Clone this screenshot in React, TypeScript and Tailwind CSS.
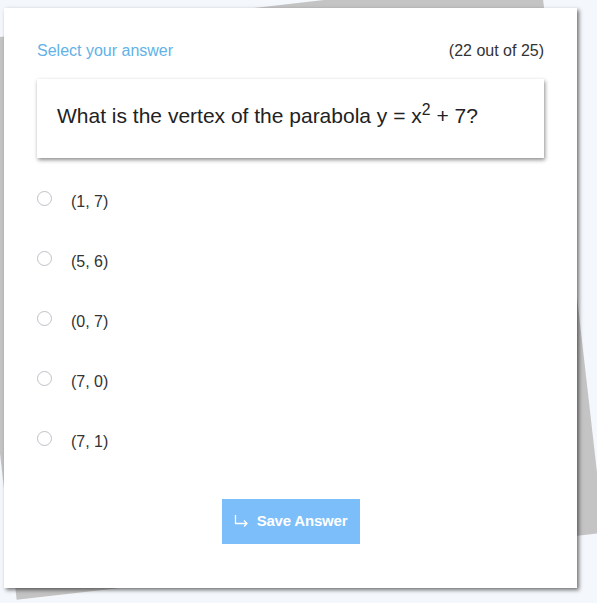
import React from "react";

const options = ["(1, 7)", "(5, 6)", "(0, 7)", "(7, 0)", "(7, 1)"];

function SaveIcon() {
  return (
    <svg width="15" height="13" viewBox="0 0 15 13" fill="none" stroke="white" strokeWidth="1.3">
      <path d="M1.5 0V8.5H13" />
      <path d="M10 5.5L13 8.5L10 11.5" />
    </svg>
  );
}

export default function App() {
  return (
    <div className="relative h-screen overflow-hidden bg-[#f4f7fb] font-['Liberation_Sans',Arial,sans-serif]">
      {/* rotated paper behind the card */}
      <div className="absolute left-[-17px] top-[7px] h-[561px] w-[591px] -rotate-[6.5deg] bg-[#c4c4c4]" />

      <div className="relative ml-[4px] mt-[8px] flex h-[580px] w-[573px] flex-col bg-white px-[33px] pt-[31px] shadow-[2px_2px_4px_rgba(0,0,0,0.55)]">
        <div className="flex items-center justify-between text-[16px] leading-6">
          <span className="text-[#62b2e8]">Select your answer</span>
          <span className="text-[#333]">(22 out of 25)</span>
        </div>

        <div className="mt-4 bg-white px-5 pb-[28px] pt-[22px] text-[21px] leading-[29px] text-[#222] shadow-[1px_2px_4px_rgba(0,0,0,0.45)]">
          What is the vertex of the parabola y = x<sup>2</sup> + 7?
        </div>

        <ul className="mt-[10px] flex flex-col">
          {options.map((opt) => (
            <li key={opt} className="flex h-[60px] items-center">
              <span className="h-[15px] w-[15px] rounded-full border border-[#bcc2c8] bg-white" />
              <span className="ml-[19px] pt-[8px] text-[16px] leading-5 text-[#333]">{opt}</span>
            </li>
          ))}
        </ul>

        <div className="mt-[31px] flex justify-center">
          <button className="flex h-[45px] w-[138px] items-center justify-center gap-[8px] bg-[#7bbefa] text-[15px] font-bold text-white">
            <SaveIcon />
            <span className="tracking-[-0.2px]">Save Answer</span>
          </button>
        </div>
      </div>
    </div>
  );
}
